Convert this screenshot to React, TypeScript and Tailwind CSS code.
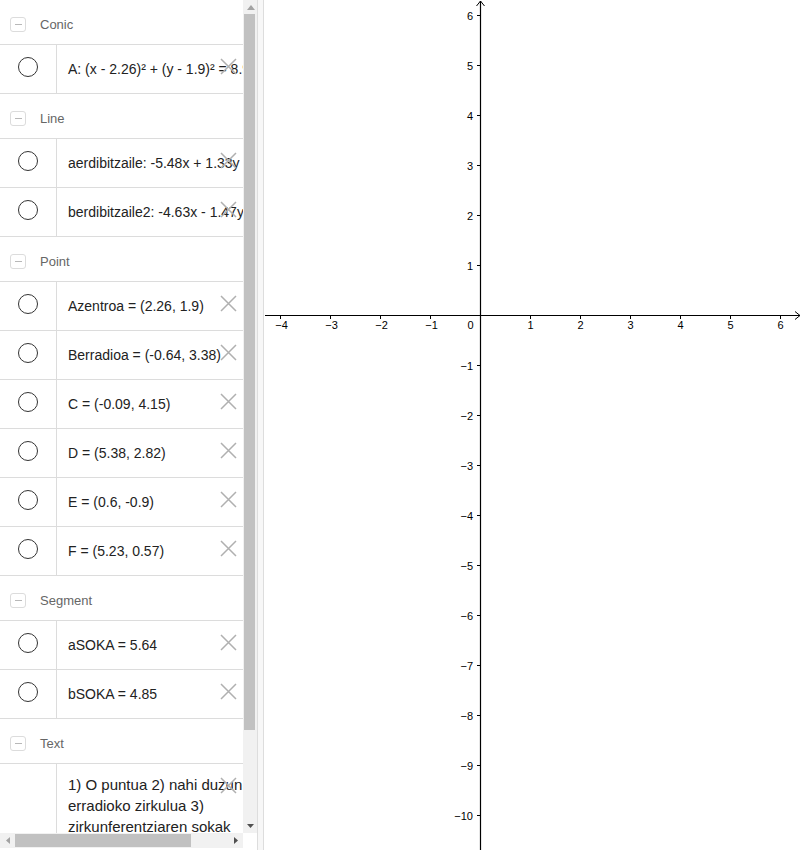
import React from "react";

type Item = { text: string; marble?: boolean; multiline?: boolean };
type Section = { title: string; items: Item[] };

const SECTIONS: Section[] = [
  { title: "Conic", items: [{ text: "A: (x - 2.26)² + (y - 1.9)² = 8.96" }] },
  {
    title: "Line",
    items: [
      { text: "aerdibitzaile: -5.48x + 1.33y = -5.69" },
      { text: "berdibitzaile2: -4.63x - 1.47y = -19.04" },
    ],
  },
  {
    title: "Point",
    items: [
      { text: "Azentroa = (2.26, 1.9)" },
      { text: "Berradioa = (-0.64, 3.38)" },
      { text: "C = (-0.09, 4.15)" },
      { text: "D = (5.38, 2.82)" },
      { text: "E = (0.6, -0.9)" },
      { text: "F = (5.23, 0.57)" },
    ],
  },
  {
    title: "Segment",
    items: [{ text: "aSOKA = 5.64" }, { text: "bSOKA = 4.85" }],
  },
  {
    title: "Text",
    items: [
      {
        text: "1) O puntua 2) nahi duzun erradioko zirkulua 3) zirkunferentziaren sokak",
        marble: false,
        multiline: true,
      },
    ],
  },
];

function DeleteCross() {
  return (
    <svg width="17" height="17" viewBox="0 0 17 17" className="absolute right-[6px] top-[13px]">
      <path d="M1 1 L16 16 M16 1 L1 16" stroke="#b0b0b0" strokeWidth="1.5" fill="none" />
    </svg>
  );
}

function Header({ title }: { title: string }) {
  return (
    <div className="flex h-[45px] items-center border-b border-[#dcdcdc] pt-[5px]">
      <div className="ml-[10px] flex h-[15px] w-[16px] items-center justify-center rounded-[3px] border border-[#dcdcdc]">
        <div className="h-[1.5px] w-[7px] bg-[#b8b8b8]" />
      </div>
      <span className="ml-[14px] text-[13px] text-[#666666]">{title}</span>
    </div>
  );
}

function Row({ item }: { item: Item }) {
  return (
    <div
      className={`relative flex border-b border-[#dcdcdc] ${item.multiline ? "h-[90px]" : "h-[49px]"}`}
    >
      <div className="flex w-[57px] shrink-0 justify-center border-r border-[#dcdcdc] pt-[12px]">
        {item.marble !== false && (
          <div className="h-[20px] w-[20px] rounded-full border border-[#333333]" />
        )}
      </div>
      {item.multiline ? (
        <div className="w-[190px] shrink-0 pl-[11px] pt-[10px] text-[15px] leading-[21px] text-[#222222]">
          {item.text}
        </div>
      ) : (
        <div className="flex items-center whitespace-nowrap pl-[11px] text-[14px] text-[#222222]">
          {item.text}
        </div>
      )}
      <DeleteCross />
    </div>
  );
}

function VerticalScrollbar() {
  return (
    <div className="flex w-[14px] shrink-0 flex-col bg-[#f1f1f1]">
      <div className="flex h-[14px] items-center justify-center pl-[1px]">
        <svg width="8" height="5" viewBox="0 0 8 5">
          <path d="M0 5 L4 0 L8 5 Z" fill="#a3a3a3" />
        </svg>
      </div>
      <div className="ml-[1px] h-[716px] w-[11px] bg-[#c1c1c1]" />
      <div className="flex-1" />
      <div className="flex h-[14px] items-center justify-center pl-[1px]">
        <svg width="7" height="4" viewBox="0 0 7 4">
          <path d="M0 0 L7 0 L3.5 4 Z" fill="#505050" />
        </svg>
      </div>
    </div>
  );
}

function HorizontalScrollbar() {
  return (
    <div className="flex h-[15px] w-[243px] items-center bg-[#f1f1f1]">
      <div className="flex w-[15px] justify-center">
        <svg width="4" height="7" viewBox="0 0 4 7">
          <path d="M4 0 L4 7 L0 3.5 Z" fill="#a3a3a3" />
        </svg>
      </div>
      <div className="h-[13px] w-[176px] bg-[#c1c1c1]" />
      <div className="flex-1" />
      <div className="flex w-[15px] justify-center">
        <svg width="4" height="7" viewBox="0 0 4 7">
          <path d="M0 0 L4 3.5 L0 7 Z" fill="#505050" />
        </svg>
      </div>
    </div>
  );
}

function Graphics() {
  const ox = 216;
  const oy = 315;
  const u = 50;
  const xs = [-4, -3, -2, -1, 1, 2, 3, 4, 5, 6];
  const ys: number[] = [];
  for (let i = 6; i >= -10; i--) if (i !== 0) ys.push(i);
  const lab = (n: number) => (n < 0 ? "\u2212" + Math.abs(n) : String(n));
  return (
    <svg width="538" height="850" className="block bg-white font-['Liberation_Sans',Arial,sans-serif]">
      <line x1="1" y1={oy + 0.5} x2="536" y2={oy + 0.5} stroke="#000" strokeWidth="1.2" />
      <path d={`M531 ${oy - 3.5} L536 ${oy + 0.5} L531 ${oy + 4.5}`} stroke="#000" strokeWidth="1" fill="none" />
      <line x1={ox + 0.5} y1="1" x2={ox + 0.5} y2="850" stroke="#000" strokeWidth="1.2" />
      <path d={`M${ox - 3.5} 6 L${ox + 0.5} 1 L${ox + 4.5} 6`} stroke="#000" strokeWidth="1" fill="none" />
      {xs.map((n) => (
        <g key={"x" + n}>
          <line x1={ox + n * u + 0.5} y1={oy} x2={ox + n * u + 0.5} y2={oy + 4} stroke="#000" strokeWidth="1" />
          <text x={ox + n * u + (n < 0 ? 1.5 : 0.5)} y={oy + 14} fontSize="11" textAnchor="middle" fill="#000">
            {lab(n)}
          </text>
        </g>
      ))}
      <text x={ox - 9.5} y={oy + 14} fontSize="11" textAnchor="middle" fill="#000">
        0
      </text>
      {ys.map((n) => (
        <g key={"y" + n}>
          <line x1={ox - 3} y1={oy - n * u + 0.5} x2={ox} y2={oy - n * u + 0.5} stroke="#000" strokeWidth="1" />
          <text x={ox - 7} y={oy - n * u + 4.5} fontSize="11" textAnchor="end" fill="#000">
            {lab(n)}
          </text>
        </g>
      ))}
    </svg>
  );
}

export default function App() {
  return (
    <div className="flex h-[850px] w-[802px] overflow-hidden bg-white font-['Liberation_Sans',Arial,sans-serif]">
      <div className="flex w-[257px] shrink-0 flex-col">
        <div className="flex h-[833px]">
          <div className="w-[243px] shrink-0 overflow-hidden">
            {SECTIONS.map((s) => (
              <div key={s.title}>
                <Header title={s.title} />
                {s.items.map((it) => (
                  <Row key={it.text} item={it} />
                ))}
              </div>
            ))}
          </div>
          <VerticalScrollbar />
        </div>
        <HorizontalScrollbar />
      </div>
      <div className="w-[7px] shrink-0 border-x border-[#dddddd] bg-[#f7f7f7]" />
      <Graphics />
    </div>
  );
}
